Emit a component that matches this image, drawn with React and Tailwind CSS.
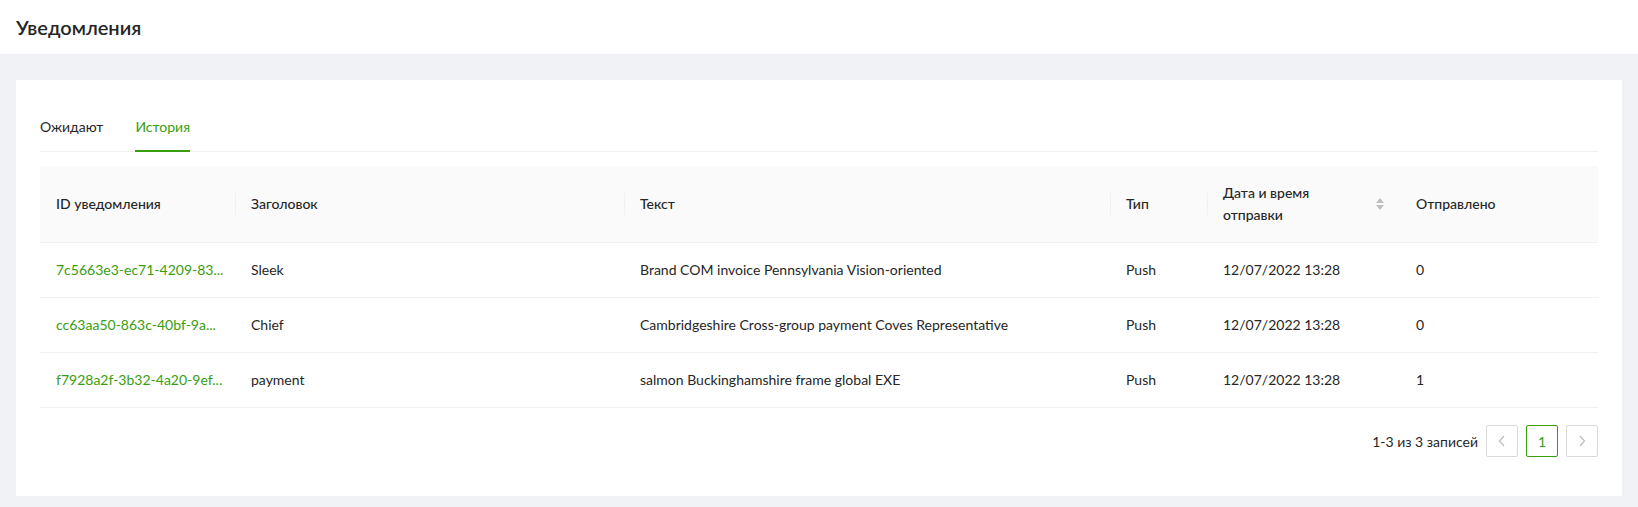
const rows = [
  { id: "7c5663e3-ec71-4209-83...", title: "Sleek", text: "Brand COM invoice Pennsylvania Vision-oriented", type: "Push", date: "12/07/2022 13:28", sent: "0" },
  { id: "cc63aa50-863c-40bf-9a...", title: "Chief", text: "Cambridgeshire Cross-group payment Coves Representative", type: "Push", date: "12/07/2022 13:28", sent: "0" },
  { id: "f7928a2f-3b32-4a20-9ef...", title: "payment", text: "salmon Buckinghamshire frame global EXE", type: "Push", date: "12/07/2022 13:28", sent: "1" },
];

const Divider = () => (
  <span className="absolute left-0 top-1/2 -translate-y-1/2 h-[22px] w-px bg-[#f0f0f0]" />
);

const SortIcon = () => (
  <span className="flex flex-col items-center gap-[2px] text-[#bfbfbf]">
    <svg width="8" height="5" viewBox="0 0 8 5"><path d="M4 0 L8 5 L0 5 Z" fill="currentColor" /></svg>
    <svg width="8" height="5" viewBox="0 0 8 5"><path d="M0 0 L8 0 L4 5 Z" fill="currentColor" /></svg>
  </span>
);

const Chevron = ({ dir }) => (
  <svg width="10" height="12" viewBox="0 0 10 12" fill="none" stroke="#bfbfbf" strokeWidth="1.3">
    {dir === "left" ? <path d="M7 1 L2.5 6 L7 11" /> : <path d="M3 1 L7.5 6 L3 11" />}
  </svg>
);

export default function App() {
  return (
    <div className="min-h-screen bg-[#f0f2f5] text-[14px] text-[#262626]" style={{ fontFamily: "Lato, 'Noto Sans', sans-serif" }}>
      <div className="bg-white h-[54px] px-4 flex items-center">
        <h1 className="text-[20px] font-semibold text-[#262626]">Уведомления</h1>
      </div>

      <div className="px-4 pt-[26px] pb-3">
        <div className="bg-white px-6 pt-[24px] pb-[39px]">
          <div className="flex gap-8 border-b border-[#f0f0f0]">
            <div className="py-3 leading-[22px]">Ожидают</div>
            <div className="py-3 leading-[22px] text-[#389e0d] border-b-2 border-[#389e0d] -mb-px">История</div>
          </div>

          <table className="w-full table-fixed mt-[14px] border-collapse">
            <colgroup>
              <col className="w-[195px]" />
              <col className="w-[389px]" />
              <col className="w-[486px]" />
              <col className="w-[97px]" />
              <col className="w-[193px]" />
              <col />
            </colgroup>
            <thead>
              <tr className="bg-[#fafafa] border-b border-[#f0f0f0] font-medium leading-[22px]">
                <th className="text-left font-medium px-4 py-4">ID уведомления</th>
                <th className="relative text-left font-medium px-4 py-4"><Divider />Заголовок</th>
                <th className="relative text-left font-medium px-4 py-4"><Divider />Текст</th>
                <th className="relative text-left font-medium px-4 py-4"><Divider />Тип</th>
                <th className="relative text-left font-medium px-4 py-4">
                  <Divider />
                  <div className="flex items-center justify-between">
                    <span>Дата и время<br />отправки</span>
                    <SortIcon />
                  </div>
                </th>
                <th className="text-left font-medium px-4 py-4">Отправлено</th>
              </tr>
            </thead>
            <tbody>
              {rows.map((r) => (
                <tr key={r.id} className="border-b border-[#f0f0f0] leading-[22px]">
                  <td className="px-4 py-4 whitespace-nowrap text-[#389e0d]">{r.id}</td>
                  <td className="px-4 py-4">{r.title}</td>
                  <td className="px-4 py-4">{r.text}</td>
                  <td className="px-4 py-4">{r.type}</td>
                  <td className="px-4 py-4">{r.date}</td>
                  <td className="px-4 py-4">{r.sent}</td>
                </tr>
              ))}
            </tbody>
          </table>

          <div className="flex justify-end items-center gap-2 mt-[17px]">
            <span>1-3 из 3 записей</span>
            <button className="w-8 h-8 flex items-center justify-center border border-[#d9d9d9] rounded-[2px]">
              <Chevron dir="left" />
            </button>
            <button className="w-8 h-8 flex items-center justify-center border border-[#389e0d] text-[#389e0d] rounded-[2px]">1</button>
            <button className="w-8 h-8 flex items-center justify-center border border-[#d9d9d9] rounded-[2px]">
              <Chevron dir="right" />
            </button>
          </div>
        </div>
      </div>
    </div>
  );
}
